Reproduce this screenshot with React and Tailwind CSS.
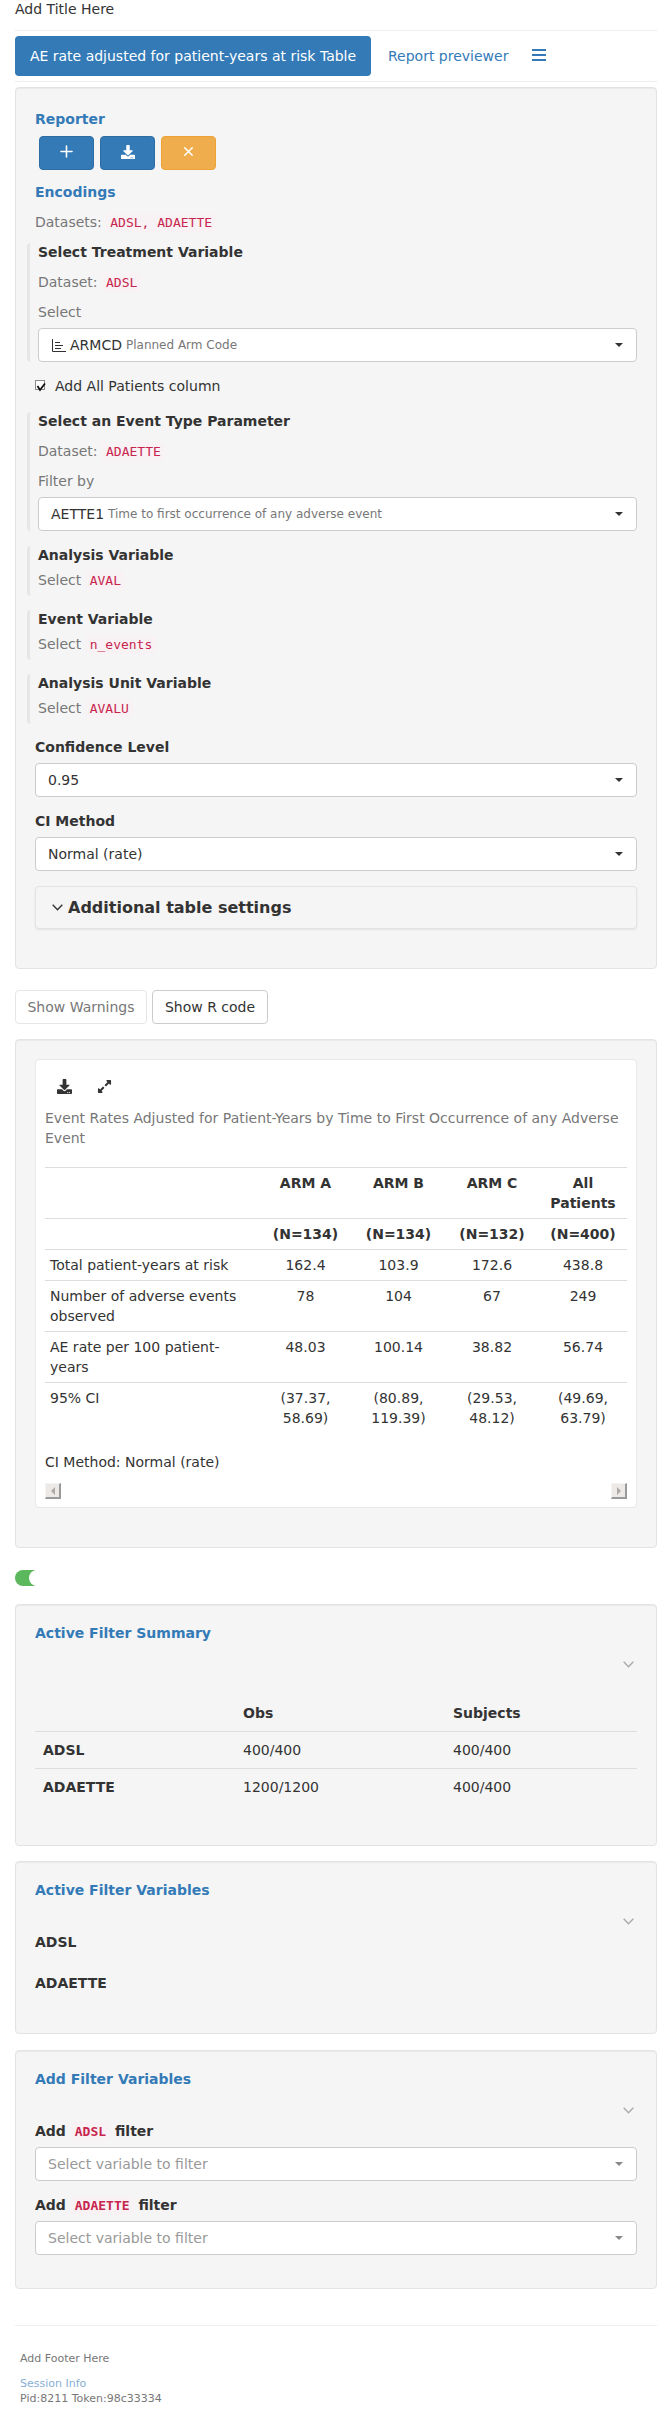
import React from "react";
import { FaDownload, FaExpandAlt } from "react-icons/fa";
import { Plus, X } from "lucide-react";

const rows = [
  ["Total patient-years at risk", "162.4", "103.9", "172.6", "438.8"],
  ["Number of adverse events observed", "78", "104", "67", "249"],
  ["AE rate per 100 patient-years", "48.03", "100.14", "38.82", "56.74"],
  ["95% CI", "(37.37, 58.69)", "(80.89, 119.39)", "(29.53, 48.12)", "(49.69, 63.79)"],
];

function Code({ children }) {
  return (
    <code className="rounded-[4px] bg-[#f9f2f4] px-1 py-0.5 font-['DejaVu_Sans_Mono',monospace] text-[13px] text-[#c7254e]">
      {children}
    </code>
  );
}

function Muted({ label, code }) {
  return (
    <div className="h-5 leading-5 text-[#777]">
      {label} <Code>{code}</Code>
    </div>
  );
}

function SelectBox({ children, placeholder }) {
  return (
    <div
      className={`flex h-[34px] items-center justify-between rounded-[4px] border border-[#ccc] bg-white pr-[13px] pl-3 ${placeholder ? "text-[#999]" : "text-[#333]"}`}
    >
      <div className="flex items-center">{children}</div>
      <span
        className={`h-0 w-0 border-x-4 border-t-4 border-x-transparent ${placeholder ? "border-t-[#888]" : "border-t-[#333]"}`}
      />
    </div>
  );
}

function Block({ className, children }) {
  return (
    <div className={`-ml-2 rounded-l-[4px] border-l-[3px] border-[#e6e6e6] pl-2 ${className}`}>
      {children}
    </div>
  );
}

function Panel({ className, children }) {
  return (
    <div
      className={`rounded-[4px] border border-[#e3e3e3] bg-[#f5f5f5] px-[19px] shadow-[inset_0_1px_1px_rgba(0,0,0,0.05)] ${className}`}
    >
      {children}
    </div>
  );
}

function Chevron({ className }) {
  return (
    <svg width="11" height="7" viewBox="0 0 11 7" fill="none" stroke="currentColor" strokeWidth="1.4" className={className}>
      <path d="M0.7 0.8L5.5 5.8L10.3 0.8" />
    </svg>
  );
}

function PanelChevron() {
  return (
    <div className="mt-4 flex h-[10px] items-center justify-end pr-[3px] text-[#aaa]">
      <Chevron />
    </div>
  );
}

function ScrollButton({ dir }) {
  return (
    <div className="flex h-4 w-4 items-center justify-center border-t border-l border-t-[#f4f4f4] border-l-[#f4f4f4] border-r-2 border-b-2 border-r-[#9a9a9a] border-b-[#9a9a9a] bg-[#ece9e6]">
      <span
        className={`h-0 w-0 border-y-4 border-y-transparent ${dir === "left" ? "border-r-4 border-r-[#aaa]" : "border-l-4 border-l-[#aaa]"}`}
      />
    </div>
  );
}

export default function App() {
  return (
    <div className="min-h-[2411px] bg-white px-[15px] font-['DejaVu_Sans',sans-serif] text-sm text-[#333]">
      <div className="h-[18px] leading-[18px]">Add Title Here</div>
      <hr className="mt-3 border-[#eee]" />

      <div className="mt-[5px] flex h-10 items-center">
        <div className="flex h-10 w-[356px] items-center justify-center rounded-[4px] bg-[#337ab7] text-white">
          AE rate adjusted for patient-years at risk Table
        </div>
        <span className="ml-[17px] text-[#337ab7]">Report previewer</span>
        <svg width="14" height="12" viewBox="0 0 14 12" className="ml-6 -mt-[2px] text-[#337ab7]" fill="currentColor">
          <rect width="14" height="2" />
          <rect y="5" width="14" height="2" />
          <rect y="10" width="14" height="2" />
        </svg>
      </div>
      <hr className="mt-[5px] border-[#eee]" />

      <Panel className="mt-[5px] h-[882px] pt-[21px]">
        <div className="h-5 font-bold leading-5 text-[#337ab7]">Reporter</div>
        <div className="mt-[7px] ml-1 flex gap-[6px]">
          <div className="flex h-[34px] w-[55px] items-center justify-center rounded-[4px] border border-[#2e6da4] bg-[#337ab7] pb-[4px] text-white">
            <Plus size={19} strokeWidth={2} />
          </div>
          <div className="flex h-[34px] w-[55px] items-center justify-center rounded-[4px] border border-[#2e6da4] bg-[#337ab7] pb-[2px] text-white">
            <FaDownload size={14} />
          </div>
          <div className="flex h-[34px] w-[55px] items-center justify-center rounded-[4px] border border-[#eea236] bg-[#f0ad4e] pb-[3px] text-white">
            <X size={15} strokeWidth={2.4} />
          </div>
        </div>
        <div className="mt-3 h-5 font-bold leading-5 text-[#337ab7]">Encodings</div>
        <div className="mt-[10px]">
          <Muted label="Datasets:" code="ADSL, ADAETTE" />
        </div>

        <Block className="mt-[11px]">
          <div className="h-[18px] font-bold leading-[18px]">Select Treatment Variable</div>
          <div className="mt-[11px]">
            <Muted label="Dataset:" code="ADSL" />
          </div>
          <div className="mt-[10px] h-5 leading-5 text-[#777]">Select</div>
          <div className="mt-[6px]">
            <SelectBox>
              <svg width="15" height="13" viewBox="0 0 15 13" className="mr-1 text-[#333]" fill="none" stroke="currentColor" strokeWidth="1">
                <path d="M1.5 0V12.5H15" />
                <path d="M4 3.5H9M4 6.5H12M4 9.5H10" />
              </svg>
              ARMCD
              <span className="ml-1 text-xs text-[#777]">Planned Arm Code</span>
            </SelectBox>
          </div>
        </Block>

        <div className="mt-[14px] flex h-5 items-center">
          <svg width="12" height="13" viewBox="0 0 12 13" fill="none">
            <rect x="0.5" y="0.5" width="9" height="9" fill="#fff" stroke="#8a8a8a" />
            <path d="M2.5 6L5 10L10 3.5" stroke="#111" strokeWidth="1.8" />
          </svg>
          <span className="ml-2 leading-5">Add All Patients column</span>
        </div>

        <Block className="mt-4">
          <div className="h-[18px] font-bold leading-[18px]">Select an Event Type Parameter</div>
          <div className="mt-[11px]">
            <Muted label="Dataset:" code="ADAETTE" />
          </div>
          <div className="mt-[10px] h-5 leading-5 text-[#777]">Filter by</div>
          <div className="mt-[6px]">
            <SelectBox>
              AETTE1
              <span className="ml-1 text-xs text-[#777]">Time to first occurrence of any adverse event</span>
            </SelectBox>
          </div>
        </Block>

        <Block className="mt-[15px] h-[50px]">
          <div className="h-[18px] font-bold leading-[18px]">Analysis Variable</div>
          <div className="mt-[6px]">
            <Muted label="Select" code="AVAL" />
          </div>
        </Block>
        <Block className="mt-[14px] h-[50px]">
          <div className="h-[18px] font-bold leading-[18px]">Event Variable</div>
          <div className="mt-[6px]">
            <Muted label="Select" code="n_events" />
          </div>
        </Block>
        <Block className="mt-[14px] h-[50px]">
          <div className="h-[18px] font-bold leading-[18px]">Analysis Unit Variable</div>
          <div className="mt-[6px]">
            <Muted label="Select" code="AVALU" />
          </div>
        </Block>

        <div className="mt-[13px] h-5 font-bold leading-5">Confidence Level</div>
        <div className="mt-[6px]">
          <SelectBox>0.95</SelectBox>
        </div>
        <div className="mt-[14px] h-5 font-bold leading-5">CI Method</div>
        <div className="mt-[6px]">
          <SelectBox>Normal (rate)</SelectBox>
        </div>

        <div className="mt-[15px] flex h-[43px] items-center rounded-[4px] border border-[#e3e3e3] bg-[#f5f5f5] pl-4 shadow-[0_1px_2px_rgba(0,0,0,0.08)]">
          <Chevron className="text-[#333]" />
          <span className="ml-[5px] text-base font-bold">Additional table settings</span>
        </div>
      </Panel>

      <div className="mt-[21px] flex gap-[5px]">
        <div className="flex h-[34px] w-[132px] items-center justify-center rounded-[4px] border border-[#e6e6e6] bg-white text-[#777]">
          Show Warnings
        </div>
        <div className="flex h-[34px] w-[116px] items-center justify-center rounded-[4px] border border-[#ccc] bg-white">
          Show R code
        </div>
      </div>

      <Panel className="mt-[15px] pt-[19px] pb-[39px]">
        <div className="rounded-[4px] border border-[#e8e8e8] bg-white px-[9px] pb-2">
          <div className="flex h-12 items-center pl-3 pt-1 text-[#333]">
            <FaDownload size={15} />
            <FaExpandAlt size={15} className="ml-[25px]" />
          </div>
          <div className="leading-5 text-[#777]">
            Event Rates Adjusted for Patient-Years by Time to First Occurrence of any Adverse Event
          </div>
          <table className="mt-[19px] w-full table-fixed border-collapse">
            <colgroup>
              <col className="w-[214px]" />
              <col className="w-[93px]" />
              <col className="w-[93px]" />
              <col className="w-[94px]" />
              <col />
            </colgroup>
            <thead>
              <tr className="border-t border-[#ddd] font-bold">
                <th />
                <th className="px-1 py-[5px] text-center align-top leading-5">ARM A</th>
                <th className="px-1 py-[5px] text-center align-top leading-5">ARM B</th>
                <th className="px-1 py-[5px] text-center align-top leading-5">ARM C</th>
                <th className="px-1 py-[5px] text-center align-top leading-5">All Patients</th>
              </tr>
              <tr className="border-t border-[#ddd] font-bold">
                <th />
                <th className="py-[5px] text-center leading-5">(N=134)</th>
                <th className="py-[5px] text-center leading-5">(N=134)</th>
                <th className="py-[5px] text-center leading-5">(N=132)</th>
                <th className="py-[5px] text-center leading-5">(N=400)</th>
              </tr>
            </thead>
            <tbody>
              {rows.map((row) => (
                <tr key={row[0]} className="border-t border-[#ddd]">
                  {row.map((cell, i) => (
                    <td
                      key={i}
                      className={`py-[5px] align-top leading-5 ${i === 0 ? "pl-[5px] pr-2 text-left" : "px-3 text-center"}`}
                    >
                      {cell}
                    </td>
                  ))}
                </tr>
              ))}
            </tbody>
          </table>
          <div className="mt-[19px] h-5 leading-5">CI Method: Normal (rate)</div>
          <div className="mt-[11px] flex justify-between">
            <ScrollButton dir="left" />
            <ScrollButton dir="right" />
          </div>
        </div>
      </Panel>

      <div className="relative mt-[22px] h-4 w-[26px] rounded-full bg-[#5cb85c]">
        <span className="absolute top-0 left-[14px] h-4 w-4 rounded-full bg-white" />
      </div>

      <Panel className="mt-[18px] h-[242px] pt-[18px]">
        <div className="h-5 font-bold leading-5 text-[#337ab7]">Active Filter Summary</div>
        <PanelChevron />
        <table className="mt-[26px] w-full table-fixed border-collapse">
          <colgroup>
            <col className="w-[200px]" />
            <col className="w-[210px]" />
            <col />
          </colgroup>
          <thead>
            <tr className="font-bold">
              <th />
              <th className="px-2 py-2 text-left leading-5">Obs</th>
              <th className="px-2 py-2 text-left leading-5">Subjects</th>
            </tr>
          </thead>
          <tbody>
            <tr className="border-t border-[#ddd]">
              <td className="px-2 py-2 font-bold leading-5">ADSL</td>
              <td className="px-2 py-2 leading-5">400/400</td>
              <td className="px-2 py-2 leading-5">400/400</td>
            </tr>
            <tr className="border-t border-[#ddd]">
              <td className="px-2 py-2 font-bold leading-5">ADAETTE</td>
              <td className="px-2 py-2 leading-5">1200/1200</td>
              <td className="px-2 py-2 leading-5">400/400</td>
            </tr>
          </tbody>
        </table>
      </Panel>

      <Panel className="mt-[15px] h-[173px] pt-[18px]">
        <div className="h-5 font-bold leading-5 text-[#337ab7]">Active Filter Variables</div>
        <PanelChevron />
        <div className="mt-[6px] h-5 font-bold leading-5">ADSL</div>
        <div className="mt-[21px] h-5 font-bold leading-5">ADAETTE</div>
      </Panel>

      <Panel className="mt-4 h-[239px] pt-[18px]">
        <div className="h-5 font-bold leading-5 text-[#337ab7]">Add Filter Variables</div>
        <PanelChevron />
        <div className="mt-[6px] h-5 font-bold leading-5">
          Add <Code>ADSL</Code> filter
        </div>
        <div className="mt-[6px]">
          <SelectBox placeholder>Select variable to filter</SelectBox>
        </div>
        <div className="mt-[14px] h-5 font-bold leading-5">
          Add <Code>ADAETTE</Code> filter
        </div>
        <div className="mt-[6px]">
          <SelectBox placeholder>Select variable to filter</SelectBox>
        </div>
      </Panel>

      <hr className="mt-9 border-[#eee]" />
      <div className="mt-[25px] pl-[5px] text-[11px] text-[#777]">
        <div className="h-[15px] leading-[15px]">Add Footer Here</div>
        <div className="mt-[10px] h-[15px] leading-[15px] text-[#337ab7] opacity-60">Session Info</div>
        <div className="h-[15px] leading-[15px]">Pid:8211 Token:98c33334</div>
      </div>
    </div>
  );
}
